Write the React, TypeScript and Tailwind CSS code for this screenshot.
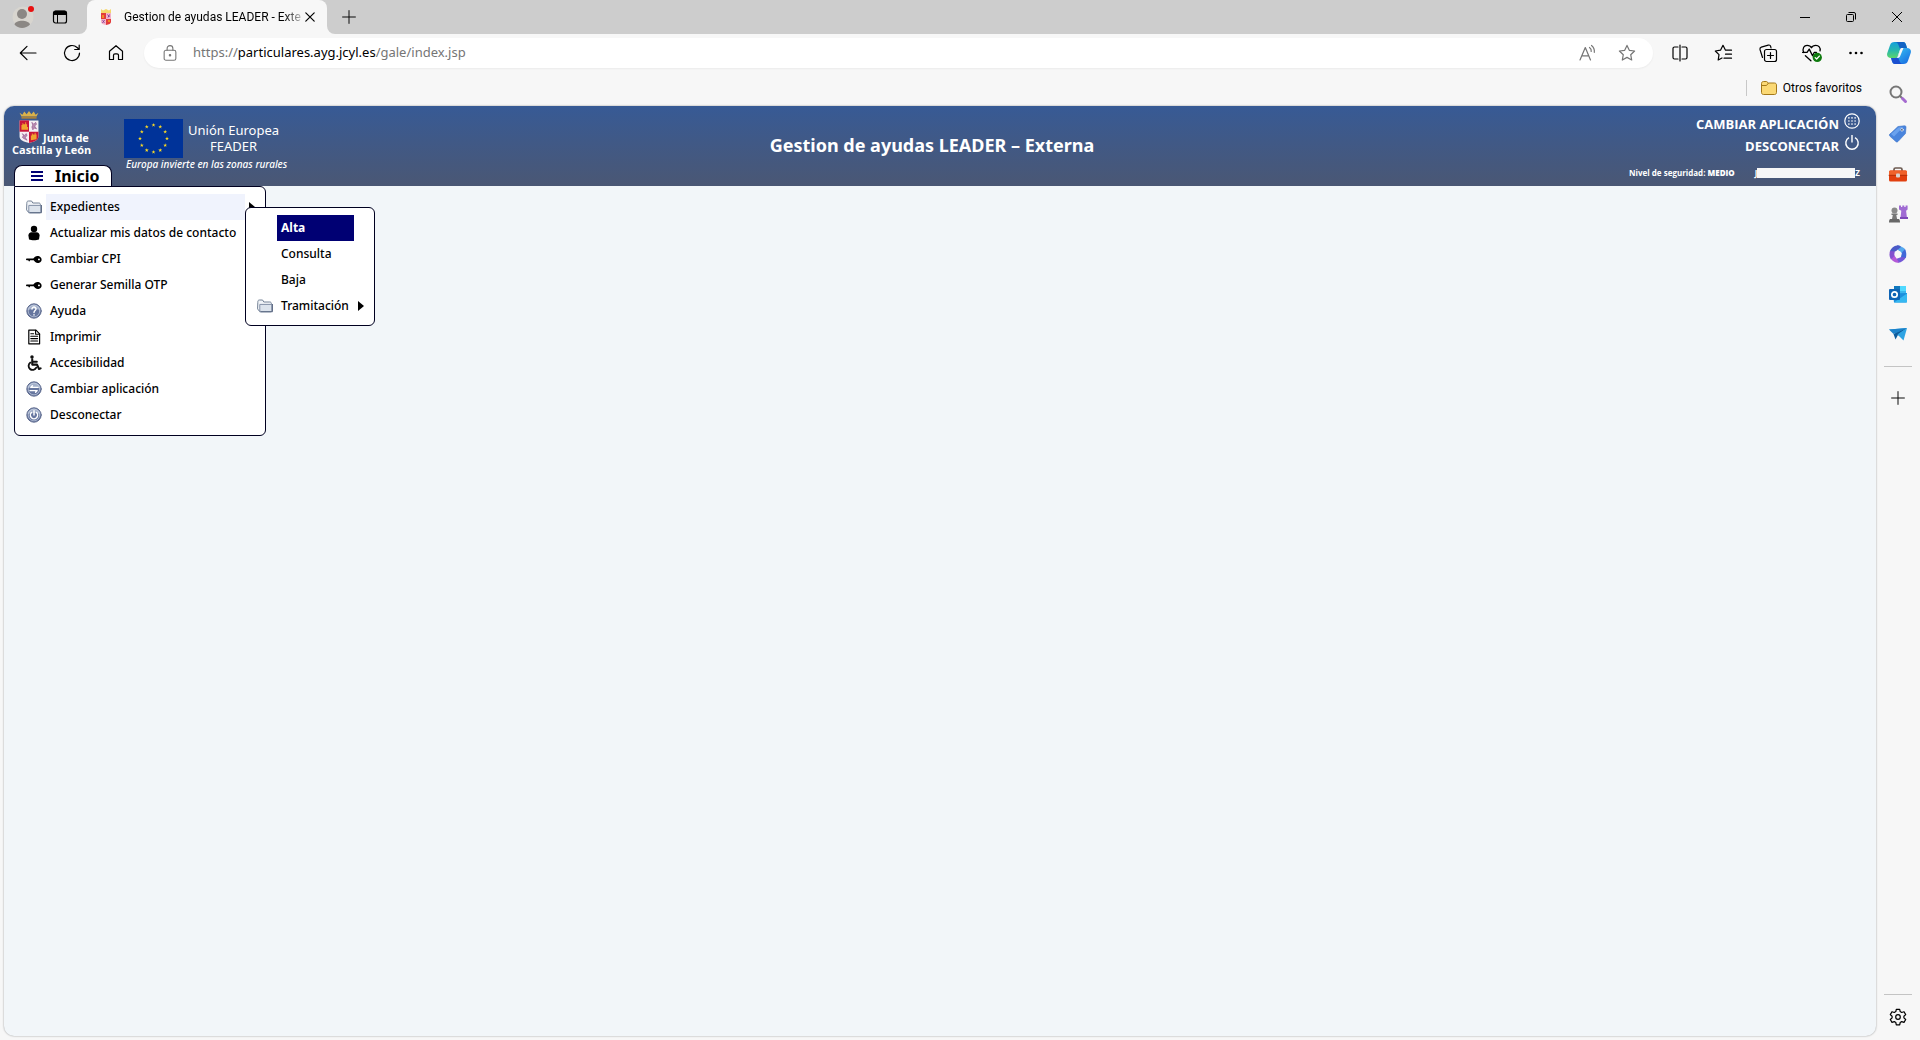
import type { ReactNode } from 'react';

type IconProps = { className?: string; children: ReactNode; size?: number };

function Icon({ className, children, size = 20 }: IconProps) {
  return (
    <svg
      width={size}
      height={size}
      viewBox="0 0 20 20"
      fill="none"
      stroke="currentColor"
      strokeWidth="1.2"
      strokeLinecap="round"
      strokeLinejoin="round"
      className={className}
      aria-hidden="true"
    >
      {children}
    </svg>
  );
}

/* Browser icons */

const STAR = 'M10 2.4l2.3 4.9 5.3.7-3.9 3.7 1 5.3L10 14.4 5.300 17l1-5.300L2.400 8l5.300-.7z';

const BackIcon = () => <Icon><path d="M18 10H2.500M9 3.300 2.300 10 9 16.700" /></Icon>;
const ReloadIcon = () => <Icon><path d="M17.500 10a7.500 7.500 0 1 1-2.400-5.500L17 6.300M17.200 2v4.500h-4.500" /></Icon>;
const HomeIcon = () => (
  <Icon><path d="M3.500 8.200 10 2.700l6.500 5.500v8.300h-4v-4.200a1.500 1.500 0 0 0-1.500-1.500H9a1.500 1.500 0 0 0-1.500 1.500v4.200h-4z" /></Icon>
);
const LockIcon = () => (
  <Icon size={18}>
    <rect x="3.500" y="7" width="13" height="11" rx="2" />
    <path d="M6.800 7V5a3.200 3.200 0 0 1 6.400 0v2" />
    <circle cx="10" cy="12.500" r=".8" fill="currentColor" />
  </Icon>
);
const ReadAloudIcon = () => (
  <Icon><path d="M3 17 8.300 4.500 13.500 17M4.800 12.800h7M12.500 4.500a4 4 0 0 1 1.700 4M14.500 2.500a7.500 7.500 0 0 1 2.800 6.800" /></Icon>
);
const StarIcon = () => <Icon><path d={STAR} /></Icon>;
const SplitIcon = () => (
  <Icon>
    <path d="M8 4H4.500A1.500 1.500 0 0 0 3 5.500v9A1.500 1.500 0 0 0 4.500 16H8M12 4h3.500A1.500 1.500 0 0 1 17 5.500v9a1.500 1.500 0 0 1-1.500 1.500H12M10 2v16" />
  </Icon>
);
const FavoritesIcon = () => (
  <Icon><path d="M17.500 7.200h-6L9 2.300 6.500 7.200l-5.200.8 3.700 3.700-.8 5.300 3.800-2M11.500 11.200h6M10 15.200h7.500" /></Icon>
);
const CollectionsIcon = () => (
  <Icon>
    <path d="M4.500 14.500 2 6.500a2 2 0 0 1 1.300-2.400l7-2A2 2 0 0 1 12.700 3.500L13 5" />
    <rect x="6.500" y="6.500" width="12" height="12" rx="2" />
    <path d="M12.500 9.500v6M9.500 12.500h6" />
  </Icon>
);
const EssentialsIcon = () => (
  <Icon size={22}>
    <path d="M2.500 9.500C.8 5.500 3 3 5.500 3 7.500 3 9 4.200 9.500 5.200 10 4.200 11.500 3 13.500 3c2.500 0 4.500 2 3.800 5M4 12.500l5 4.500M1.500 9.500h4l2-3 3 6 1.500-3h2" />
    <circle cx="14.800" cy="14" r="4.200" fill="#0f7b0f" stroke="none" />
    <path d="m12.900 14.200 1.300 1.300 2.500-2.700" stroke="white" />
  </Icon>
);
const DotsIcon = () => (
  <Icon>
    <g fill="currentColor" stroke="none">
      <circle cx="4.500" cy="10" r="1.300" />
      <circle cx="10" cy="10" r="1.300" />
      <circle cx="15.500" cy="10" r="1.300" />
    </g>
  </Icon>
);
const PlusIcon = () => <Icon size={16}><path d="M10 2v16M2 10h16" /></Icon>;
const CloseIcon = () => <Icon size={12}><path d="m3 3 14 14M17 3 3 17" strokeWidth="2" /></Icon>;
const GearIcon = () => (
  <Icon>
    <circle cx="10" cy="10" r="2.300" />
    <path d="M8.300 2.300h3.400l.5 2.300 1.500.9 2.300-.8 1.700 2.900-1.800 1.600v1.700l1.800 1.600-1.700 2.900-2.300-.8-1.500.9-.5 2.300H8.300l-.5-2.300-1.500-.9-2.300.8-1.700-2.900 1.800-1.600V9.200L2.300 7.600 4 4.700l2.300.8 1.500-.9z" />
  </Icon>
);

const CopilotIcon = () => (
  <svg width="24" height="24" viewBox="0 0 24 24" aria-hidden="true">
    <defs>
      <linearGradient id="cop-a" x1="0" y1="0" x2="0" y2="1">
        <stop offset="0" stopColor="#14a0dc" />
        <stop offset=".5" stopColor="#25b6b0" />
        <stop offset="1" stopColor="#5bd66b" />
      </linearGradient>
      <linearGradient id="cop-b" x1="0" y1="0" x2="1" y2="1">
        <stop offset="0" stopColor="#3fd0f5" />
        <stop offset="1" stopColor="#1565e0" />
      </linearGradient>
    </defs>
    <path d="M7.500 1H16c1.800 0 2.500 1.200 3 2.800L20 7h-4c-1.800 0-2.700.8-3.300 2.500L10 17H4c-3 0-4.600-2-3.700-5L3 4.200C3.700 2 5.200 1 7.500 1z" fill="url(#cop-a)" />
    <path d="M7.500 1H16c1.800 0 2.500 1.200 3 2.800L20 7h-4c-1.300 0-2.200.5-2.800 1.500L11.500 4C10.800 2 9.800 1 7.500 1z" fill="#1263c4" />
    <path d="M16.500 23H8c-1.800 0-2.500-1.200-3-2.800L4 17h4c1.800 0 2.700-.8 3.300-2.500L14 7h6c3 0 4.600 2 3.700 5L21 19.800c-.7 2.200-2.200 3.200-4.500 3.200z" fill="url(#cop-b)" />
    <path d="M16.500 23H8c-1.800 0-2.500-1.200-3-2.800L4 17h4c1.300 0 2.200-.5 2.800-1.500l1.700 4.500c.7 2 1.700 3 4 3z" fill="#1b4fd0" />
    <path d="M13.500 7.500c.7-.5 1.200-.5 2-.5h1L13 15.500c-.6 1.200-1.600 1.500-4 1.500 1.400-.3 2-1.300 2.300-2.500z" fill="#f7f7f7" />
  </svg>
);

const SearchIcon = () => (
  <Icon>
    <circle cx="8" cy="8" r="5.500" stroke="#777" strokeWidth="2" />
    <path d="m12.200 12.200 2 2" stroke="#777" strokeWidth="2" />
    <path d="m14.500 14.500 3 3" stroke="#a56bd0" strokeWidth="3" />
  </Icon>
);
const TagIcon = () => (
  <Icon>
    <path d="m2 10 8-7.500 6.500-.7c1 0 1.500.5 1.500 1.500l-.5 6.200L10 17.500c-.8.7-1.500.7-2.200 0L2 12.300c-.8-.8-.7-1.600 0-2.300z" fill="#4a85dd" stroke="#3b72c8" strokeWidth=".6" />
    <path d="m3 10 7.500-6.500 5-.7L6 12.500z" fill="#6ba2ee" stroke="none" />
    <circle cx="14" cy="5.800" r="1.300" fill="#16396f" stroke="white" strokeWidth=".7" />
  </Icon>
);
const ToolboxIcon = () => (
  <Icon>
    <path d="M6 7V5.500C6 4.500 6.500 4 7.500 4h5c1 0 1.500.5 1.500 1.500V7" stroke="#6d5b52" strokeWidth="1.700" />
    <rect x="1" y="6.500" width="18" height="11" rx="1.500" fill="#e2400f" stroke="none" />
    <path d="M1 8c0-1 .5-1.500 1.500-1.500h15c1 0 1.500.5 1.500 1.500v3H1z" fill="#f0622b" stroke="none" />
    <path d="M1 11.300h18" stroke="#a92c08" strokeWidth=".8" />
    <rect x="8" y="9.500" width="4" height="4" rx="1" fill="#d8d4d0" stroke="none" />
  </Icon>
);
const ChessIcon = () => (
  <Icon>
    <g stroke="none">
      <path d="M11 1.500h2v1.500h1.300V1.500h2V3h1.300V1.500h2v4l-1.500 1.300.8 6.700H12.500l.8-6.700L11 5.500z" fill="#a06bd3" />
      <path d="M12 13h8v2h-8z" fill="#7d46b8" />
      <circle cx="6.500" cy="6.500" r="3" fill="#8a8a8a" />
      <path d="M3.500 9.500h6v1.500H8.300l.8 4H4l.8-4H3.500z" fill="#777" />
      <path d="M2 15h9c.8 1 1 2 1 3.500H1C1 17 1.200 16 2 15z" fill="#686868" />
    </g>
  </Icon>
);
const Microsoft365Icon = () => (
  <Icon>
    <g stroke="none">
      <path d="M9 1.500c2-.6 6 1.500 8 3.500L15 10 10 6z" fill="#55a9ee" />
      <path d="M17 5c1.300 2.500 1.700 6 .8 9l-5.300.7L14 8.500z" fill="#4169d8" />
      <path d="M17.800 13.500c-1.500 3-4.500 4.800-7.500 5.200l-3.800-3.200 7-2.500z" fill="#7458d7" />
      <path d="M11 18.600c-3 .4-6-1-8-3.600l2.500-5 3 4.500z" fill="#b45ad8" />
      <path d="M3 15.500C1.300 13 1.200 9.500 2 7l5-1.500-.8 6.500z" fill="#8251cf" />
      <path d="M2 7c1.200-3 4-5.200 7-5.500 1.500-.6 3 .3 4 1.500L7.500 7.500z" fill="#4b5ac7" />
      <circle cx="10" cy="10" r="3.200" fill="#f7f7f7" />
    </g>
  </Icon>
);
const OutlookIcon = () => (
  <Icon>
    <g stroke="none">
      <path d="M6 2h12v8H6z" fill="#38b6ee" />
      <path d="M6 2h6v5H6z" fill="#1178bd" />
      <path d="M12 2h6v5h-6z" fill="#50d9ff" />
      <path d="M5 9.500 19 9v8.500c0 .6-.4 1-1 1H6z" fill="#1b8fdd" />
      <path d="m6 18.500 13-9v8c0 .6-.4 1-1 1z" fill="#35b8f1" />
      <rect x="1" y="5" width="11" height="11" rx="1" fill="#0f64b5" />
    </g>
    <circle cx="6.500" cy="10.500" r="2.700" stroke="white" strokeWidth="1.700" />
  </Icon>
);
const TelegramIcon = () => (
  <Icon>
    <g stroke="none">
      <path d="M1 5.500 19 4l-7.500 8z" fill="#34abe8" />
      <path d="m1 5.500 4.500 4.500L19 4z" fill="#1c82ca" />
      <path d="M5.500 10 19 4l-8.500 6-3 5.500z" fill="#0e5c9c" />
      <path d="M9.500 10.500 19 4l-3.500 12.500z" fill="#2ea3e3" />
    </g>
  </Icon>
);

/* Application drawings */

function Shield({ className }: { className: string }) {
  return (
    <svg viewBox="0 0 22 36" className={className} aria-hidden="true">
      <path d="m1 3 2 4h16l2-4-3 2-2-3.500-2.500 3L11 1 8.500 4.500 6 1.500 4 5z" fill="#d9b14a" />
      <path d="M3 7h16v2.200H3z" fill="#a8803a" />
      <path d="M1 11h20v17c0 4-5 5.500-10 7C6 33.500 1 32 1 28z" fill="#f4eef2" />
      <path d="M1 11h10v12H1z" fill="#c9163a" />
      <path d="M11 23h10v5c0 4-5 5.500-10 7z" fill="#c9163a" />
      <path d="M3 21v-5h1v-2h1v1h2v-2h1v2h1v3h1v3zM13 32v-5h1v-2h1v1h2v-2h1v2h1v5z" fill="#f0a52e" />
      <path d="M14 13l2 2 2-2 1 2-2 2 2 3-2-1-2 2-1-3 1-2zM4 25l2 2 2-2 1 2-2 2 2 3-2-1-2-1-1-1 1-2z" fill="#b78bb0" stroke="#8d4c86" strokeWidth=".6" />
    </svg>
  );
}

/* Bolder version of the shield for the browser tab */
function Favicon() {
  return (
    <svg width="12" height="16" viewBox="0 0 12 16" className="shrink-0" aria-hidden="true">
      <path d="M1 0l2 1.500L6 0l3 1.500L11 0v4H1z" fill="#f5d76a" />
      <path d="M1 4h5v6H1zM6 10h5v3c0 1.500-2 2.500-5 3z" fill="#e23b3b" />
      <path d="M6 4h5v6H6zM1 10h5v6c-3-.5-5-1.500-5-3z" fill="#f3b3c8" />
      <path d="M2 6h2v3H2zM8 11h2v2H8z" fill="#f08a24" />
      <path d="M7.500 5.500 9.500 8M9.500 5.500 8 8.500M2.500 11.500l2 2M4.500 11l-2 3" stroke="#8a3f9b" />
    </svg>
  );
}

function EuFlag() {
  const stars = Array.from({ length: 12 }, (_, i) => {
    const angle = (i * Math.PI) / 6;
    return { x: 29.500 + 13.500 * Math.sin(angle), y: 19.500 - 13.500 * Math.cos(angle) };
  });
  return (
    <svg viewBox="0 0 59 39" className="h-[39px] w-[59px]" aria-hidden="true">
      <path d="M0 0h59v39H0z" fill="#003399" />
      {stars.map((s, i) => (
        <path
          key={i}
          transform={`translate(${s.x} ${s.y})`}
          d="M0-2 .5-.6 2-.6.8.3 1.200 1.700 0 .8-1.200 1.700-.8.3-2-.6-.5-.6z"
          fill="#ffdd22"
        />
      ))}
    </svg>
  );
}

const FolderIcon = () => (
  <Icon size={16}>
    <path d="M1 5c0-1.500.5-2.500 2-2.500h4L8.500 5H16c1.500 0 2 1 2 2v9.500H3L1 14z" fill="#f1f4f8" stroke="#6f7d92" />
    <path d="M4 8h14.500v8c0 .8-.5 1.300-1.300 1.300H4z" fill="#dce3ec" stroke="#7d8ba3" />
    <path d="M19.300 8v9.200H5" stroke="#55627c" />
  </Icon>
);
const PersonIcon = () => (
  <Icon size={16}>
    <g fill="black" stroke="none">
      <circle cx="10" cy="5" r="4" />
      <path d="M3 13c0-2 1.500-4 4-4h6c2.500 0 4 2 4 4l-.8 5c-3 1.300-9.400 1.300-12.400 0z" />
    </g>
  </Icon>
);
const KeyIcon = () => (
  <Icon size={16}>
    <path d="M1 10.500h10M4 10.500v1.500" stroke="black" strokeWidth="2" />
    <path d="M9 10c1.500-3.500 5-4.500 7.500-3.300 4 1.800 4 6.600 0 8C14 15.600 10.500 14.500 9 10z" fill="black" stroke="none" />
    <circle cx="16.200" cy="10.500" r="1.200" fill="white" stroke="none" />
  </Icon>
);
const DocumentIcon = () => (
  <Icon size={16}>
    <path d="M3.500 1.500h9l4.500 4.500v12.500H3.500z" fill="white" stroke="black" strokeWidth="1.500" />
    <path d="M12 1.500V6.500h5M6 6h3.500M6 9h8.500M6 12h8.500M6 15h8.500" stroke="black" strokeWidth="1.400" />
  </Icon>
);
const WheelchairIcon = () => (
  <Icon size={16}>
    <circle cx="7.500" cy="2.500" r="2.200" fill="#111" stroke="none" />
    <path d="M7.800 5.500v6.500h6l2.500 5.500 2-.8M8 8.500h5.500" stroke="#111" strokeWidth="2.600" />
    <path d="M5.500 9.500a5 5 0 1 0 7.300 6.300" stroke="#111" strokeWidth="2.300" />
  </Icon>
);

function RoundIcon({ children }: { children: ReactNode }) {
  return (
    <Icon size={16}>
      <circle cx="10" cy="10" r="9" fill="#66769f" stroke="#59658a" />
      <path d="M2 9a8 7 0 0 1 16 0c-5-2-11-2-16 0z" fill="#a3b0ca" stroke="none" />
      <circle cx="10" cy="10" r="7.300" stroke="#cbd4e4" strokeWidth=".8" />
      <g stroke="white" strokeWidth="1.800">{children}</g>
    </Icon>
  );
}

const HelpIcon = () => <RoundIcon><path d="M7.500 7.500c0-3.500 5.500-3 5 .3-.3 1.700-2.500 1.800-2.500 4M10 14.800v.2" /></RoundIcon>;
const SwapIcon = () => <RoundIcon><path d="M15 8H6l2-2M5 12h9l-2 2" /></RoundIcon>;
const PowerIcon = () => <RoundIcon><path d="M10 4.500V10M6.800 7a4.500 4.500 0 1 0 6.400 0" /></RoundIcon>;

type MenuEntry = { label: string; icon?: ReactNode; submenu?: boolean; active?: boolean };

const menuItems: MenuEntry[] = [
  { label: 'Expedientes', icon: <FolderIcon />, submenu: true, active: true },
  { label: 'Actualizar mis datos de contacto', icon: <PersonIcon /> },
  { label: 'Cambiar CPI', icon: <KeyIcon /> },
  { label: 'Generar Semilla OTP', icon: <KeyIcon /> },
  { label: 'Ayuda', icon: <HelpIcon /> },
  { label: 'Imprimir', icon: <DocumentIcon /> },
  { label: 'Accesibilidad', icon: <WheelchairIcon /> },
  { label: 'Cambiar aplicación', icon: <SwapIcon /> },
  { label: 'Desconectar', icon: <PowerIcon /> },
];

const submenuItems: MenuEntry[] = [
  { label: 'Alta', active: true },
  { label: 'Consulta' },
  { label: 'Baja' },
  { label: 'Tramitación', icon: <FolderIcon />, submenu: true },
];

const sidebarApps = [
  { name: 'Buscar', icon: <SearchIcon /> },
  { name: 'Compras', icon: <TagIcon /> },
  { name: 'Herramientas', icon: <ToolboxIcon /> },
  { name: 'Juegos', icon: <ChessIcon /> },
  { name: 'Microsoft 365', icon: <Microsoft365Icon /> },
  { name: 'Outlook', icon: <OutlookIcon /> },
  { name: 'Enviar', icon: <TelegramIcon /> },
];

function Arrow() {
  return (
    <svg width="6" height="10" viewBox="0 0 6 10" aria-hidden="true">
      <path d="M0 0l6 5-6 5z" fill="black" />
    </svg>
  );
}

function ToolButton({ label, children }: { label: string; children: ReactNode }) {
  return (
    <button aria-label={label} className="flex h-9 w-11 shrink-0 items-center justify-center">
      {children}
    </button>
  );
}

function TabStrip() {
  return (
    <div className="flex h-[34px] items-center bg-[#cdcdcd]">
      <button aria-label="Perfil" className="ml-3 flex w-6 justify-center">
        <svg width="24" height="24" viewBox="0 0 24 24" aria-hidden="true">
          <circle cx="11" cy="12" r="10.500" fill="#d8d5cf" />
          <circle cx="10" cy="9" r="5" fill="#8b8784" />
          <path d="M2.500 19.500c1-5 14-5 15.500 0-4 4.500-12 4.500-15.500 0z" fill="#8b8784" />
          <circle cx="19" cy="4" r="3" fill="#e81010" />
        </svg>
      </button>
      <button aria-label="Menú de pestañas" className="ml-4 flex w-4 justify-center">
        <svg width="16" height="16" viewBox="0 0 16 16" aria-hidden="true">
          <rect x="1.500" y="2" width="13" height="12" rx="2" fill="none" stroke="black" strokeWidth="1.200" />
          <path d="M1.500 6V4c0-1.300.8-2.200 2-2.200h9c1.200 0 2 .9 2 2.200v2z" />
          <path d="M5.500 5v9" stroke="black" />
        </svg>
      </button>
      <div className="ml-[11px] h-full w-2 bg-[#f7f7f7]"><div className="h-full w-full rounded-br-lg bg-[#cdcdcd]" /></div>
      <div className="flex h-full w-[240px] items-center rounded-t-lg bg-[#f7f7f7] pr-[7px] pl-[13px]">
        <Favicon />
        <span className="ml-3 bg-linear-to-r from-black from-88% to-[#bbbbbb] bg-clip-text font-[Roboto,sans-serif] text-[12px] whitespace-nowrap text-transparent">
          Gestion de ayudas LEADER - Exte
        </span>
        <button aria-label="Cerrar pestaña" className="ml-auto flex w-6 justify-center"><CloseIcon /></button>
      </div>
      <div className="h-full w-2 bg-[#f7f7f7]"><div className="h-full w-full rounded-bl-lg bg-[#cdcdcd]" /></div>
      <button aria-label="Nueva pestaña" className="ml-[6px] flex w-4 justify-center"><PlusIcon /></button>
      <div className="ml-auto flex">
        <button aria-label="Minimizar" className="flex w-[46px] justify-center">
          <svg width="10" height="10" viewBox="0 0 10 10" stroke="black"><path d="M0 5.500h10" /></svg>
        </button>
        <button aria-label="Restaurar" className="flex w-[46px] justify-center">
          <svg width="10" height="10" viewBox="0 0 10 10" stroke="black" fill="none">
            <rect x=".5" y="2.500" width="7" height="7" rx="1" />
            <path d="M2.500.5H8A1.500 1.500 0 0 1 9.500 2v5.500" />
          </svg>
        </button>
        <button aria-label="Cerrar" className="flex w-[46px] justify-center">
          <svg width="10" height="10" viewBox="0 0 10 10" stroke="black"><path d="m0 0 10 10M10 0 0 10" /></svg>
        </button>
      </div>
    </div>
  );
}

function Toolbar() {
  return (
    <div className="flex h-[38px] items-center pl-[6px]">
      <ToolButton label="Atrás"><BackIcon /></ToolButton>
      <ToolButton label="Actualizar"><ReloadIcon /></ToolButton>
      <ToolButton label="Inicio"><HomeIcon /></ToolButton>
      <div className="mr-[5px] ml-[6px] flex h-[30px] flex-1 items-center rounded-full bg-white pl-[17px] text-[#757575] shadow-xs">
        <LockIcon />
        <label htmlFor="url" className="ml-[14px] text-[13px] whitespace-nowrap">
          https://<span className="text-black">particulares.ayg.jcyl.es</span>/gale/index.jsp
        </label>
        <input id="url" className="h-full min-w-0 flex-1 px-1 text-[13px] outline-none" />
        <button aria-label="Leer en voz alta" className="flex w-10 justify-center"><ReadAloudIcon /></button>
        <button aria-label="Agregar a favoritos" className="mr-[6px] flex w-10 justify-center"><StarIcon /></button>
      </div>
      <ToolButton label="Pantalla dividida"><SplitIcon /></ToolButton>
      <ToolButton label="Favoritos"><FavoritesIcon /></ToolButton>
      <ToolButton label="Colecciones"><CollectionsIcon /></ToolButton>
      <ToolButton label="Essentials"><EssentialsIcon /></ToolButton>
      <ToolButton label="Más"><DotsIcon /></ToolButton>
      <button aria-label="Copilot" className="flex h-9 w-[42px] shrink-0 items-center justify-center">
        <CopilotIcon />
      </button>
    </div>
  );
}

function Submenu() {
  return (
    <ul className="absolute top-[20px] left-[230px] w-[130px] rounded-md border border-[#000020] bg-white pt-[7px] pb-[6px]">
      {submenuItems.map(item => (
        <li key={item.label} className="flex h-[26px] items-center">
          <span className="flex w-[31px] shrink-0 justify-end pr-1">{item.icon}</span>
          <button
            className={
              item.active
                ? 'flex h-full w-[77px] items-center bg-[#000073] px-1 font-bold text-white'
                : 'flex h-full w-[77px] items-center px-1 font-medium'
            }
          >
            {item.label}
          </button>
          {item.submenu && <span className="ml-1"><Arrow /></span>}
        </li>
      ))}
    </ul>
  );
}

function MainMenu() {
  return (
    <div className="relative ml-[2px] w-[98px]">
      <button className="flex h-[21px] w-full items-center gap-3 rounded-t-lg border border-b-0 border-[#000020] bg-white pl-4 text-[16px] leading-5 font-bold text-black">
        <svg width="12" height="12" viewBox="0 0 12 12" aria-hidden="true">
          <path d="M0 1h12v2H0zM0 5h12v2H0zM0 9h12v2H0z" fill="#000073" />
        </svg>
        Inicio
      </button>
      <div className="absolute top-[21px] left-0 z-10 w-[252px] rounded-md rounded-tl-none border border-[#000020] bg-white py-[7px] text-[12px] text-black">
        <ul>
          {menuItems.map(item => (
            <li key={item.label} className="flex h-[26px] items-center">
              <span className="flex w-[31px] shrink-0 justify-end pr-1">{item.icon}</span>
              <button
                className={
                  item.active
                    ? 'flex h-full w-[199px] items-center bg-[#f0f3fd] px-1 font-medium whitespace-nowrap'
                    : 'flex h-full w-[199px] items-center px-1 font-medium whitespace-nowrap'
                }
              >
                {item.label}
              </button>
              {item.submenu && <span className="ml-1"><Arrow /></span>}
            </li>
          ))}
        </ul>
        <Submenu />
      </div>
    </div>
  );
}

function AppHeader() {
  return (
    <header className="grid h-20 grid-cols-[1fr_auto_1fr] rounded-t-[10px] bg-linear-to-b from-[#375a95] to-[#4a5774] text-white">
      <div className="flex gap-3 pl-2">
        <div className="flex flex-col justify-between">
          <div className="flex flex-col pt-1 font-['Open_Sans',sans-serif]">
            <div className="flex items-end">
              <Shield className="ml-[6px] h-[34px] w-[22px]" />
              <span className="ml-[3px] text-[11px] leading-3 font-bold">Junta de</span>
            </div>
            <span className="text-[11px] leading-3 font-bold whitespace-nowrap">Castilla y León</span>
          </div>
          <MainMenu />
        </div>
        <div className="flex flex-col pt-[13px]">
          <div className="flex gap-[5px]">
            <EuFlag />
            <p className="pt-[3px] text-center text-[13px] leading-4 whitespace-nowrap">
              Unión Europea
              <br />
              FEADER
            </p>
          </div>
          <p className="pl-[2px] text-[10px] leading-3 font-medium whitespace-nowrap italic">
            Europa invierte en las zonas rurales
          </p>
        </div>
      </div>
      <h1 className="self-center pr-4 pb-[2px] text-[18px] leading-6 font-bold whitespace-nowrap">
        Gestion de ayudas LEADER – Externa
      </h1>
      <div className="flex flex-col items-end pt-[7px] pr-4 font-['Open_Sans',sans-serif] font-bold">
        <a href="#aplicaciones" className="flex h-[22px] items-start gap-[5px] text-[13px] leading-[22px]">
          CAMBIAR APLICACIÓN
          <svg width="16" height="16" viewBox="0 0 16 16" fill="white" aria-hidden="true">
            <circle cx="8" cy="8" r="7.200" fill="none" stroke="white" strokeWidth="1.200" />
            {[4.900, 8, 11.100].map(x => [4.900, 8, 11.100].map(y => <circle key={`${x}-${y}`} cx={x} cy={y} r=".8" />))}
          </svg>
        </a>
        <a href="#desconectar" className="flex h-[22px] items-start gap-[5px] text-[13px] leading-[22px]">
          DESCONECTAR
          <svg width="16" height="16" viewBox="0 0 16 16" fill="none" stroke="white" strokeWidth="1.400" aria-hidden="true">
            <path d="M8 0v7.500M5 2.600a6.200 6.200 0 1 0 6 0" />
          </svg>
        </a>
        <div className="mt-[10px] flex items-center text-[8px] leading-3">
          <span>Nivel de seguridad: <b>MEDIO</b></span>
          <span className="ml-5">J</span>
          <span className="h-[10px] w-[98px] bg-[#f7f7f7]" />
          <span>Z</span>
        </div>
      </div>
    </header>
  );
}

function Sidebar() {
  return (
    <aside className="flex w-11 shrink-0 flex-col items-center pt-[2px] pb-[1px]">
      {sidebarApps.map(app => (
        <button key={app.name} aria-label={app.name} className="flex h-10 w-11 items-center justify-center">
          {app.icon}
        </button>
      ))}
      <hr className="mt-3 w-7 border-[#c4c4c4]" />
      <button aria-label="Personalizar" className="mt-[11px] flex h-10 w-11 items-center justify-center"><PlusIcon /></button>
      <hr className="mt-auto w-7 border-[#c4c4c4]" />
      <button aria-label="Configuración" className="flex h-11 w-11 items-center justify-center"><GearIcon /></button>
    </aside>
  );
}

export default function App() {
  return (
    <div className="flex min-h-screen flex-col bg-[#f7f7f7] font-['Noto_Sans',sans-serif] text-black">
      <TabStrip />
      <Toolbar />
      <div className="flex flex-1">
        <div className="flex flex-1 flex-col pb-1 pl-1">
          <div className="flex h-[34px] items-center justify-end pr-[14px] pb-[2px]">
            <span className="h-4 w-px bg-[#c8c8c8]" />
            <button className="ml-[14px] flex items-center gap-[6px] font-[Roboto,sans-serif] text-[12px] leading-4">
              <svg width="16" height="14" viewBox="0 0 16 14" aria-hidden="true">
                <path d="M.5 2.500c0-1.200.8-2 2-2h3L7.500 2h6c1.200 0 2 .8 2 2v7.500c0 1.200-.8 2-2 2h-11c-1.200 0-2-.8-2-2z" fill="#fbd975" stroke="#a3781a" />
                <path d="M.5 4.500h5L7.500 2" fill="none" stroke="#a3781a" />
              </svg>
              Otros favoritos
            </button>
          </div>
          <div className="flex flex-1 flex-col rounded-[10px] bg-[#f2f6f9] shadow-[0_0_2px_rgba(0,0,0,0.4)]">
            <AppHeader />
            <main className="flex-1" />
          </div>
        </div>
        <Sidebar />
      </div>
    </div>
  );
}
